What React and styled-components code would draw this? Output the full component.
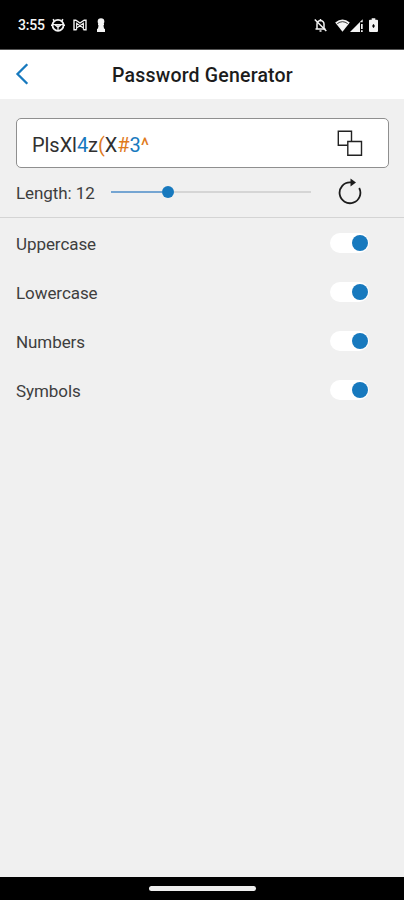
import React, { useState } from 'react';
import styled, { createGlobalStyle } from 'styled-components';

const primary = "#1779be"
const accent = "#df7a1c"
const background = "#f0f0f0"

const GlobalStyle = createGlobalStyle`
  body {
    margin: 0;
    background: ${background};
    font-family: Roboto, sans-serif;
  }
`
const Screen = styled.div`
  display: flex;
  flex-direction: column;
  width: 404px;
  height: 900px;
  overflow: hidden;
  background: ${background};
  color: #3e3e3e;
`
const StatusBar = styled.div`
  display: flex;
  align-items: center;
  justify-content: space-between;
  box-sizing: border-box;
  height: 50px;
  padding: 1px 26px 0 18px;
  background: #000;
  border-bottom: 1px solid #555;
  color: #f4f4f4;
`
const StatusGroup = styled.div`
  display: flex;
  align-items: center;
`
const Clock = styled.span`
  width: 33px;
  font-size: 14px;
  font-weight: 500;
  line-height: 16px;
  letter-spacing: -0.2px;
  white-space: nowrap;
`
const Glyph = styled.svg`
  display: block;
  flex: none;
  width: ${p => p.$w}px;
  height: ${p => p.$h}px;
  margin-left: ${p => p.$gap || 0}px;
`
const Header = styled.header`
  display: grid;
  grid-template-columns: 44px 1fr 44px;
  align-items: center;
  height: 49px;
  background: #fff;
`
const BackButton = styled.button`
  display: flex;
  padding: 0 0 2px 15px;
  border: 0;
  background: none;
`
const Title = styled.h1`
  margin: 2px 0 0 1px;
  color: #1c1c1c;
  font-size: 19.5px;
  font-weight: 500;
  line-height: 24px;
  letter-spacing: 0.2px;
  text-align: center;
`
const Generator = styled.section`
  box-sizing: border-box;
  height: 119px;
  padding: 19px 15px 0 16px;
  border-bottom: 1px solid #d4d4d4;
`
const PasswordField = styled.div`
  display: flex;
  align-items: center;
  justify-content: space-between;
  box-sizing: border-box;
  height: 50px;
  padding: 0 25px 0 15px;
  border: 1px solid #8f8f8f;
  border-radius: 5px;
  background: #fff;
`
const Password = styled.span`
  padding-top: 3px;
  font-size: 20px;
  line-height: 24px;
  letter-spacing: -0.07px;
`
const Char = styled.span`
  color: ${p => p.$kind === 'digit' ? primary : p.$kind === 'symbol' ? accent : '#303030'};
`
const IconButton = styled.button`
  display: flex;
  padding: 0;
  border: 0;
  background: none;
`
const LengthRow = styled.div`
  display: flex;
  align-items: center;
  height: 48px;
  padding-right: 27px;
`
const Label = styled.span`
  font-size: 17px;
  line-height: 22px;
  letter-spacing: -0.07px;
  white-space: nowrap;
`
const LengthLabel = styled(Label)`
  width: 95px;
  padding-top: 2px;
`
const Slider = styled.div`
  display: flex;
  align-items: center;
  width: 200px;
  margin-right: auto;
`
const Filled = styled.div`
  width: 50.5px;
  height: 2px;
  background: #75a5d2;
`
const Thumb = styled.div`
  width: 12px;
  height: 12px;
  border-radius: 50%;
  background: ${primary};
`
const Track = styled.div`
  flex: 1;
  height: 2px;
  background: #d5d5d5;
`
const Options = styled.div`
  flex: 1;
  padding-top: 1px;
`
const OptionRow = styled.div`
  display: flex;
  align-items: center;
  justify-content: space-between;
  height: 49px;
  padding: 0 35px 0 16px;
`
const Switch = styled.button`
  display: flex;
  align-items: center;
  justify-content: ${p => p.$on ? 'flex-end' : 'flex-start'};
  box-sizing: border-box;
  width: 39px;
  height: 20px;
  margin-bottom: 1px;
  padding: 0 1.5px;
  border: 0;
  border-radius: 10px;
  background: #fff;
`
const Knob = styled.span`
  width: 16px;
  height: 16px;
  border-radius: 50%;
  background: ${primary};
`
const NavBar = styled.div`
  display: flex;
  justify-content: center;
  box-sizing: border-box;
  height: 23px;
  padding: 9px 0 0 1px;
  background: #000;
`
const Handle = styled.div`
  width: 107px;
  height: 5px;
  border-radius: 3px;
  background: #eee;
`

const password = "PlsXl4z(X#3^"
const options = ["Uppercase", "Lowercase", "Numbers", "Symbols"]

const kindOf = c => /[0-9]/.test(c) ? 'digit' : /[a-z]/i.test(c) ? 'letter' : 'symbol'

const WheelIcon = () => <Glyph $w={14} $h={14} viewBox="0 0 14 14" fill="none" stroke="currentColor">
  <circle cx="7" cy="7.3" r="5.5" strokeWidth="1.8" />
  <path d="M2 6.6h10M7 7v5.5M4.2 7 7 9.2 9.8 7" strokeWidth="1.3" />
  <path d="M3 2.8 2.2 1.2M11 2.8l.8-1.6M0 7.3h1.5M12.5 7.3H14" strokeWidth="1.6" />
</Glyph>

const MailIcon = () => <Glyph $w={14} $h={12} $gap={7.5} viewBox="0 0 14 12" fill="none" stroke="currentColor">
  <path d="M3.6 10.8H1V1.2h1.8L7 4l4.2-2.8H13v9.6h-2.6" strokeWidth="1.4" />
  <path d="M3.6 10.8V4.2L10.4 9M10.4 10.8V4.2L3.6 9" strokeWidth="1.1" />
</Glyph>

const PawnIcon = () => <Glyph $w={10} $h={14} $gap={9.5} viewBox="0 0 10 14" fill="currentColor">
  <circle cx="5" cy="3.5" r="3.3" />
  <path d="M2 5.6h6v1.6H7.4l.7 3.6H9V14H1v-3.2h.9l.7-3.6H2z" />
</Glyph>

const BellOffIcon = () => <Glyph $w={13} $h={14} viewBox="0 0 13 14" fill="none" stroke="currentColor">
  <path d="M3 10.7V6.2Q3 3 6.5 2.5 10 3 10 6.2v4.5M1.5 11h10M6.5 1v1.5M5.5 13h2" strokeWidth="1.5" />
  <path d="m.8 1.5 11.5 11.5" strokeWidth="1.5" />
</Glyph>

const WifiIcon = () => <Glyph $w={15} $h={13} $gap={8} viewBox="0 0 15 13">
  <path d="M.2 3.6Q7.5-2.7 14.8 3.6L7.5 12.8z" fill="currentColor" />
  <path d="M2.3 4.6Q7.5.8 12.7 4.6" fill="none" stroke="#000" strokeWidth=".8" />
</Glyph>

const SignalIcon = () => <Glyph $w={13} $h={13} $gap={0.5} viewBox="0 0 13 13" fill="currentColor">
  <path d="M0 13 12.7.3v3H10V13zM11 5h1.7v5H11zM11 11.2h1.7V13H11z" />
</Glyph>

const BatteryIcon = () => <Glyph $w={9} $h={14} $gap={6} viewBox="0 0 9 14">
  <path d="M2.7.3h3.6v1.4H8q1 0 1 1v10Q9 14 8 14H1q-1 0-1-1V2.7q0-1 1-1h1.7z" fill="currentColor" />
  <path d="M4.5 6.3v3.4M3 8h3" stroke="#000" strokeWidth="1.2" />
</Glyph>

const BackIcon = () => <Glyph $w={14} $h={22} viewBox="0 0 14 22" fill="none" stroke={primary} strokeWidth="2.3">
  <path d="M12.3 1.2 2.5 11l9.8 9.8" />
</Glyph>

const CopyIcon = () => <Glyph $w={26} $h={26} viewBox="0 0 26 26" fill="#fff" stroke="#222" strokeWidth="1.4">
  <path d="M1.3 1.2H14.5v14H1.3z" />
  <path d="M10.8 11.5h13.7v13.7H10.8z" />
</Glyph>

const RefreshIcon = () => <Glyph $w={24} $h={28} viewBox="0 0 24 28">
  <path d="M13.5 4.4H12A10.4 10.4 0 1 0 21.2 10" fill="none" stroke="#1c1c1c" strokeWidth="1.8" />
  <path d="M12.5.5 18 4.5l-5.5 4z" fill="#1c1c1c" />
</Glyph>

export default function App() {
  const [enabled, setEnabled] = useState(options)

  const toggle = name => setEnabled(
    enabled.includes(name) ? enabled.filter(o => o !== name) : [...enabled, name]
  )

  return <Screen>
    <GlobalStyle />
    <StatusBar>
      <StatusGroup>
        <Clock>3:55</Clock>
        <WheelIcon />
        <MailIcon />
        <PawnIcon />
      </StatusGroup>
      <StatusGroup>
        <BellOffIcon />
        <WifiIcon />
        <SignalIcon />
        <BatteryIcon />
      </StatusGroup>
    </StatusBar>
    <Header>
      <BackButton aria-label="Back"><BackIcon /></BackButton>
      <Title>Password Generator</Title>
    </Header>
    <Generator>
      <PasswordField>
        <Password>
          {password.split('').map((c, i) => <Char key={i} $kind={kindOf(c)}>{c}</Char>)}
        </Password>
        <IconButton aria-label="Copy"><CopyIcon /></IconButton>
      </PasswordField>
      <LengthRow>
        <LengthLabel>Length: 12</LengthLabel>
        <Slider>
          <Filled />
          <Thumb />
          <Track />
        </Slider>
        <IconButton aria-label="Regenerate"><RefreshIcon /></IconButton>
      </LengthRow>
    </Generator>
    <Options>
      {options.map(name => <OptionRow key={name}>
        <Label>{name}</Label>
        <Switch $on={enabled.includes(name)} aria-label={name} onClick={() => toggle(name)}>
          <Knob />
        </Switch>
      </OptionRow>)}
    </Options>
    <NavBar>
      <Handle />
    </NavBar>
  </Screen>
}
